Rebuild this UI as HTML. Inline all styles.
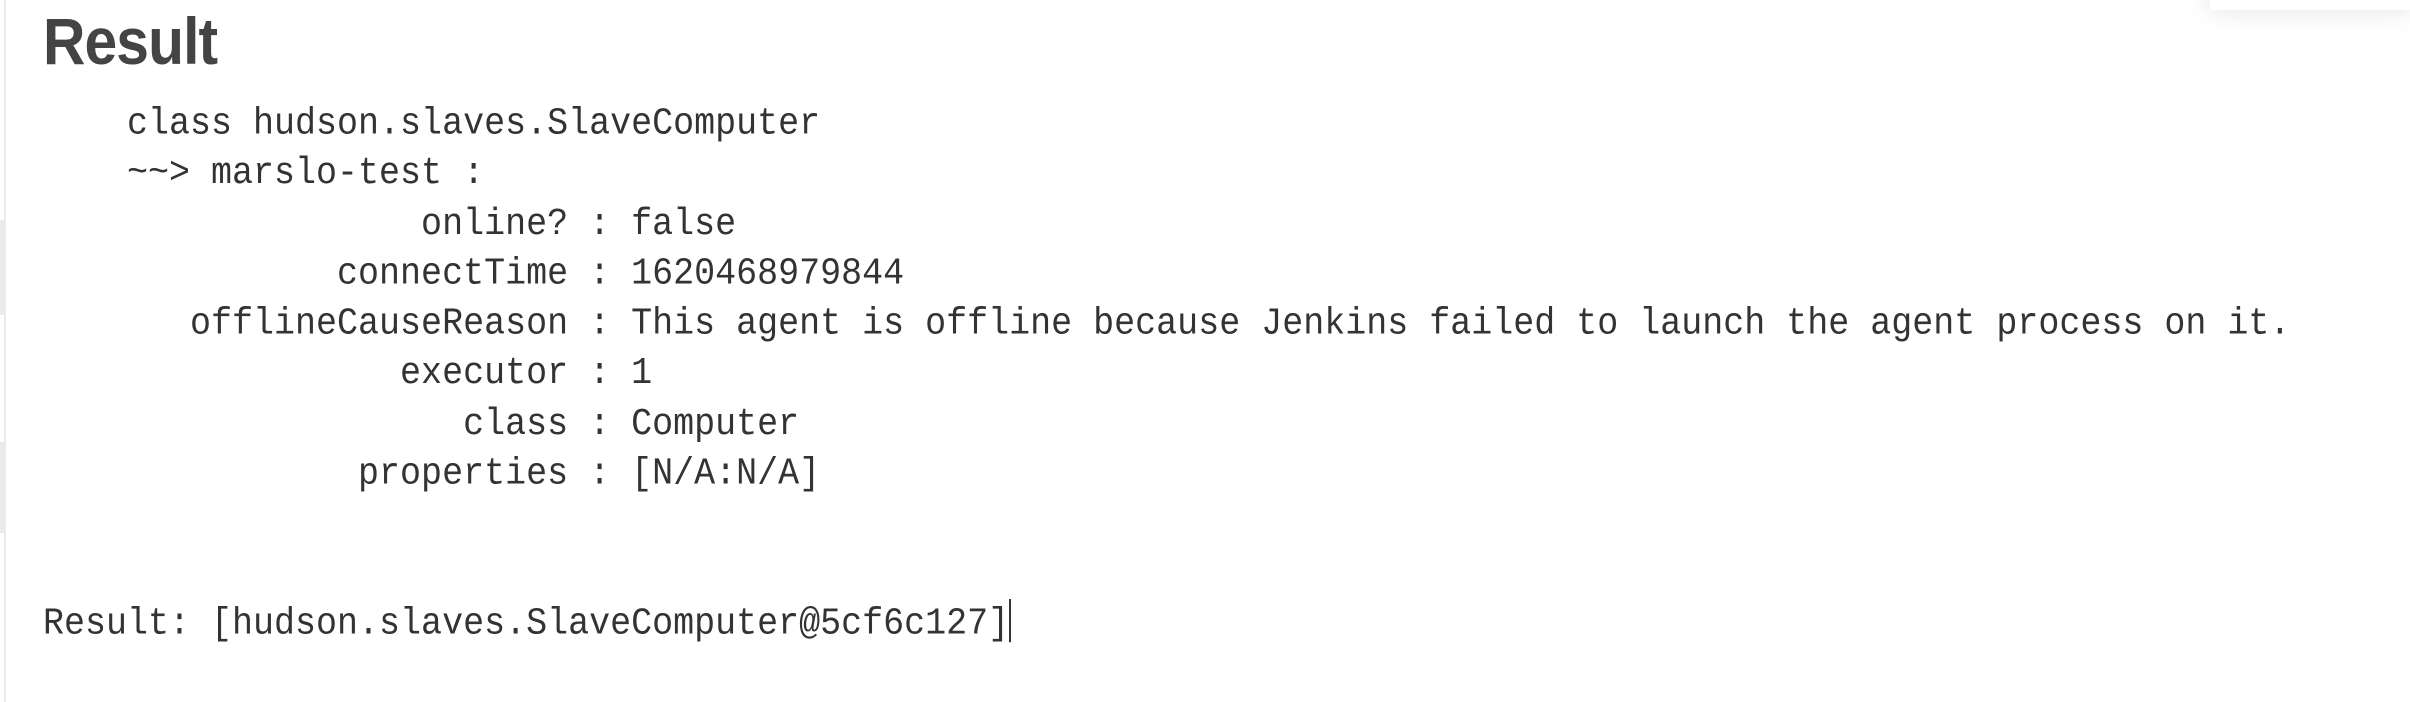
<!DOCTYPE html>
<html><head><meta charset="utf-8"><style>
html,body{margin:0;padding:0;background:#fff;width:2410px;height:702px;overflow:hidden;position:relative}
.vl{position:absolute;left:4px;top:0;width:2px;height:702px;background:#e9ebee}
.b1{position:absolute;left:0;top:220px;width:4px;height:95px;background:#e9ecef}
.b2{position:absolute;left:0;top:442px;width:4px;height:91px;background:#e9ecef}
.sh{position:absolute;right:0;top:-20px;width:200px;height:30px;box-shadow:0 0 25px rgba(0,0,0,.12);background:#fff}
h1{position:absolute;left:43px;top:0;margin:0;font:bold 66px/82px "Liberation Sans",sans-serif;color:#444;transform:scaleX(.89);transform-origin:0 0;letter-spacing:-1px}
pre{position:absolute;left:43px;top:99px;margin:0;font:35px/46.3px "Liberation Mono",monospace;color:#333;transform:scaleY(1.08);transform-origin:0 0}
.cur{display:inline-block;width:2px;height:40px;background:#333;vertical-align:-8px}
</style></head><body>
<div class="sh"></div>
<div class="vl"></div><div class="b1"></div><div class="b2"></div>
<h1>Result</h1>
<pre>    class hudson.slaves.SlaveComputer
    ~~&gt; marslo-test :
                  online? : false
              connectTime : 1620468979844
       offlineCauseReason : This agent is offline because Jenkins failed to launch the agent process on it.
                 executor : 1
                    class : Computer
               properties : [N/A:N/A]


Result: [hudson.slaves.SlaveComputer@5cf6c127]<span class="cur"></span></pre>
</body></html>
